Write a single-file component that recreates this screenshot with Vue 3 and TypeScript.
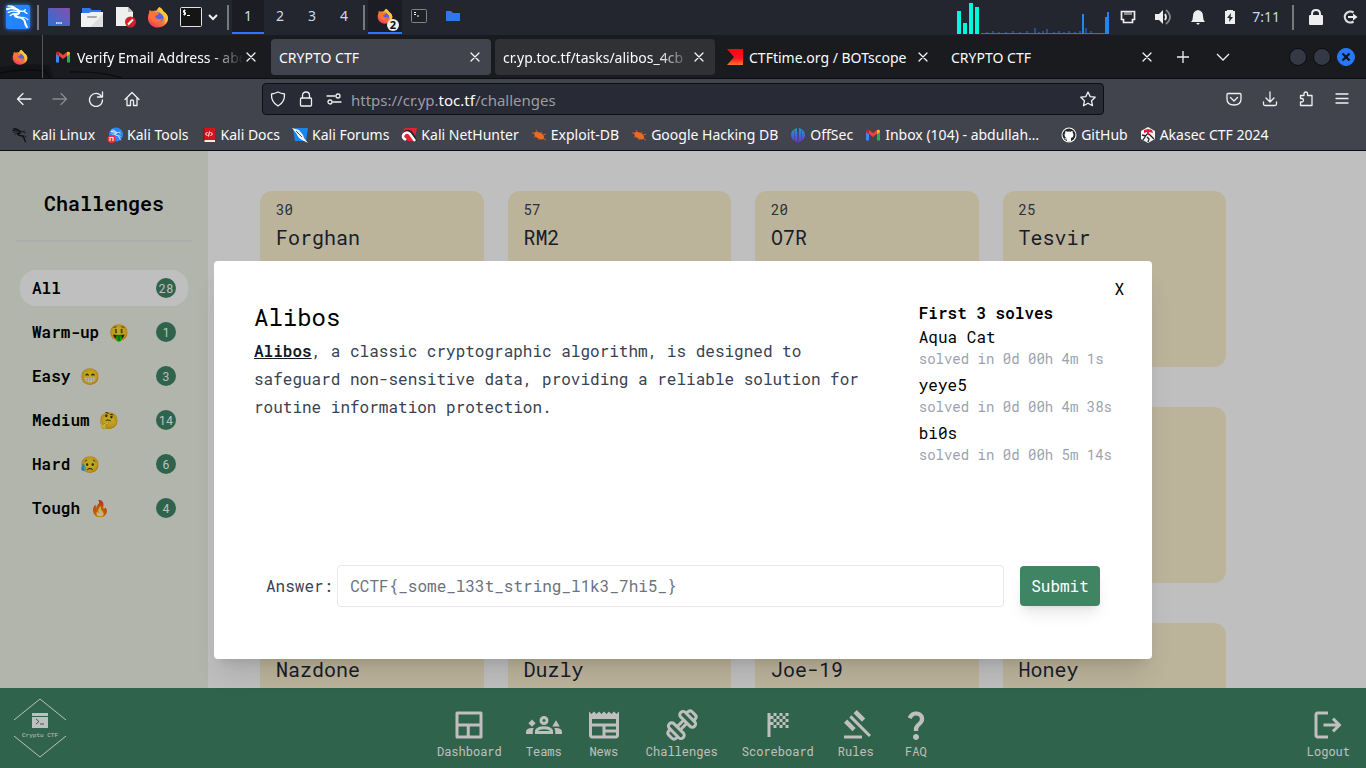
<script setup lang="ts">
import { ref } from 'vue'

interface Tab { title: string; icon?: string; state?: string; fade?: boolean }
interface Bookmark { title: string; icon: string; wide?: boolean }
interface Category { name: string; count: number }
interface Challenge { points: string; name: string }
interface Solve { team: string; time: string }
interface NavItem { label: string; icon: string }

const workspaces: number[] = [1, 2, 3, 4]

const tabs: Tab[] = [
  { title: 'Verify Email Address - abd', icon: 'gmail', fade: true },
  { title: 'CRYPTO CTF', state: 'active' },
  { title: 'cr.yp.toc.tf/tasks/alibos_4cb', state: 'hover', fade: true },
  { title: 'CTFtime.org / BOTscope', icon: 'ctftime' },
  { title: 'CRYPTO CTF' },
]

const bookmarks: Bookmark[] = [
  { title: 'Kali Linux', icon: 'dragon' },
  { title: 'Kali Tools', icon: 'tools' },
  { title: 'Kali Docs', icon: 'docs' },
  { title: 'Kali Forums', icon: 'forums' },
  { title: 'Kali NetHunter', icon: 'nethunter' },
  { title: 'Exploit-DB', icon: 'bug' },
  { title: 'Google Hacking DB', icon: 'bug' },
  { title: 'OffSec', icon: 'offsec' },
  { title: 'Inbox (104) - abdullah…', icon: 'gmail', wide: true },
  { title: 'GitHub', icon: 'github' },
  { title: 'Akasec CTF 2024', icon: 'akasec' },
]

const categories: Category[] = [
  { name: 'All', count: 28 },
  { name: 'Warm-up 🤑', count: 1 },
  { name: 'Easy 😁', count: 3 },
  { name: 'Medium 🤔', count: 14 },
  { name: 'Hard 😥', count: 6 },
  { name: 'Tough 🔥', count: 4 },
]

const challenges: Challenge[] = [
  { points: '30', name: 'Forghan' },
  { points: '57', name: 'RM2' },
  { points: '20', name: 'O7R' },
  { points: '25', name: 'Tesvir' },
  { points: '', name: '' },
  { points: '', name: '' },
  { points: '', name: '' },
  { points: '', name: '' },
  { points: '', name: 'Nazdone' },
  { points: '', name: 'Duzly' },
  { points: '', name: 'Joe-19' },
  { points: '', name: 'Honey' },
]

const solves: Solve[] = [
  { team: 'Aqua Cat', time: 'solved in 0d 00h 4m 1s' },
  { team: 'yeye5', time: 'solved in 0d 00h 4m 38s' },
  { team: 'bi0s', time: 'solved in 0d 00h 5m 14s' },
]

const nav: NavItem[] = [
  { label: 'Dashboard', icon: 'dashboard' },
  { label: 'Teams', icon: 'teams' },
  { label: 'News', icon: 'news' },
  { label: 'Challenges', icon: 'dumbbell' },
  { label: 'Scoreboard', icon: 'flag' },
  { label: 'Rules', icon: 'gavel' },
  { label: 'FAQ', icon: 'question' },
]

const selected = ref('All')
const answer = ref('')
</script>

<template>
  <svg class="sprite" aria-hidden="true">
    <defs>
      <linearGradient id="ff-flame" x1="0.8" y1="0" x2="0.2" y2="1">
        <stop offset="0" stop-color="#ffe14a" /><stop offset="0.4" stop-color="#ff9a2e" /><stop offset="1" stop-color="#f5305a" />
      </linearGradient>
      <linearGradient id="desk" x1="0" y1="1" x2="1" y2="0">
        <stop offset="0" stop-color="#2c6fd8" /><stop offset="1" stop-color="#8552a8" />
      </linearGradient>
      <linearGradient id="off" x1="0" y1="0" x2="0" y2="1">
        <stop offset="0" stop-color="#12a5c8" /><stop offset="1" stop-color="#6a35d8" />
      </linearGradient>
      <linearGradient id="ctf" x1="0" y1="0" x2="0" y2="1">
        <stop offset="0" stop-color="#ff0010" /><stop offset="0.6" stop-color="#ff1522" /><stop offset="1" stop-color="#f5782a" />
      </linearGradient>
    </defs>
    <symbol id="dragon-shape" viewBox="0 0 24 24">
      <g fill="none" stroke="currentColor" stroke-linecap="round" stroke-linejoin="round">
        <path d="M2 5q7-2.500 12 2q-1 4-5 3q1 3 5.500 3q4.500 1 5 6q.5 2 1.500 3" stroke-width="2" />
        <path d="M3 8q5-2 10-.5M5 11q2-2 6-2M14 7l4 0 3 2M18 7l1.500-1.500M8 4Q5 1 3 2M10 4Q8 2 6 2" stroke-width="1.300" />
        <path d="M15 13q4-1 7 2" stroke-width="1" />
      </g>
    </symbol>
    <symbol id="firefox" viewBox="0 0 24 24">
      <path d="M13.500 1q4 2.500 4.500 5q5 3 5 8c0 5-5 9.500-11 9.500S1 19 1 13q0-3 1.500-6l.3-3 2.700 2.500q2-1.500 5-1.500q1-3 3-4z" fill="url(#ff-flame)" />
      <circle cx="12.500" cy="12.500" r="5.500" fill="#5a5fe8" />
      <path d="M2.500 6Q7 4 9.500 7l4 .7q-1.500 2.800-4.500 3.300 0 3 4 3.500 2.500 0 4-1.500-1 4.500-5.500 5-6 0-8-5z" fill="#ff7332" />
      <path d="M18 6q5 3 5 8-1 4-4 6 2-7-3-11-3-2-2.500-8 4 2.500 4.500 5z" fill="#ffc53a" />
    </symbol>
    <symbol id="gmail" viewBox="0 0 16 16">
      <path d="M1 4v9.500h3V7z" fill="#4285f4" /><path d="M15 4v9.500h-3V7z" fill="#34a853" />
      <path d="M1 4.500V4q1-2 3-1l4 3 4-3q2-1 3 1v.5L8 10z" fill="#ea4335" />
      <path d="M12 3q2-1 3 1v1l-3 2.300z" fill="#fbbc04" /><path d="M1 4q.5-2 3-1v4.300L1 5z" fill="#c5221f" />
    </symbol>
    <symbol id="ctftime" viewBox="0 0 16 16"><path d="M0 0h16v16H0l7-8z" fill="url(#ctf)" /></symbol>
    <symbol id="dragon" viewBox="0 0 16 16"><use href="#dragon-shape" color="#111214" x="-1" y="0" width="17" height="16" /></symbol>
    <symbol id="tools" viewBox="0 0 16 16">
      <circle cx="9" cy="7.500" r="7" fill="#2c86f5" /><use href="#dragon-shape" color="#dbeaff" x="3" y="2" width="12" height="12" />
      <circle cx="4.500" cy="12" r="4" fill="#e53333" /><path d="M3 10.500v3.500M6 10.500v3.500M2.500 10.500h4" stroke="#fff" stroke-width="1" />
    </symbol>
    <symbol id="docs" viewBox="0 0 16 16">
      <path d="M2 1h12v12H2z" fill="#d3131d" /><path d="M2 13h12v2H2z" fill="#eee" /><path d="M2 1h1.500v14H2z" fill="#9c0f16" />
      <path d="M6.500 5L4.500 7l2 2M9.500 5l2 2-2 2M8.500 4.500l-1 5" fill="none" stroke="#fff" stroke-width="1" />
    </symbol>
    <symbol id="forums" viewBox="0 0 16 16">
      <path d="M4 1h12l-2 13H3L1 2z" fill="#1687f2" /><path d="M0 1l7 2 4 5 1 3 4 5-6-3-3-2-3-5z" fill="#f4f7fa" /><path d="M4 4l6 6" stroke="#4a5562" stroke-width="1" />
    </symbol>
    <symbol id="nethunter" viewBox="0 0 16 16">
      <path d="M4 1h12l-3 13H7L1 6z" fill="#e32436" /><path d="M2 8q2-5 6-4t7 10" fill="none" stroke="#202226" stroke-width="2" />
      <path d="M5 13q-5-3-2-6t6 0l5 7" fill="none" stroke="#fff" stroke-width="2.500" />
    </symbol>
    <symbol id="bug" viewBox="0 0 16 16">
      <ellipse cx="8.500" cy="8.500" rx="5.500" ry="3" transform="rotate(30 8 8)" fill="#ee6a1c" />
      <path d="M1 6l4 0M5 3l2 3M10 5l1 2M3 10l4-1M8 13l1-3M13 12l2 1M12 8l3-1" stroke="#ee6a1c" stroke-width=".8" />
    </symbol>
    <symbol id="offsec" viewBox="0 0 16 16">
      <path d="M7 1v14Q1 13 1 8t6-7zM9 1q6 2 6 7t-6 7z" fill="url(#off)" /><path d="M4.500 3v10M11.500 3v10" stroke="#42444d" stroke-width=".5" /><path d="M8 5v11" stroke="#5b45d8" stroke-width="1" />
    </symbol>
    <symbol id="github" viewBox="0 0 16 16">
      <circle cx="8" cy="8" r="7.500" fill="#fff" /><circle cx="8" cy="8" r="6.500" fill="#24262c" />
      <path d="M6 14.500v-2q-2 .5-2.700-1.500 1 .5 2.700.2Q3.500 10.500 3.500 8q0-1.200.8-2-.3-1 .2-2 1 0 1.900.8 1.600-.4 3.200 0Q10.500 4 11.500 4q.5 1 .2 2 .8.800.8 2 0 2.500-2.500 3v3.500z" fill="#fff" />
    </symbol>
    <symbol id="akasec" viewBox="0 0 16 16">
      <path d="M8 0l7 4v8l-7 4-7-4V4z" fill="#f4f4f4" /><path d="M7 7l-4 6M9 7l5 5M7 10l2 2-1 3M2 8l4 1" stroke="#24262c" stroke-width="1.300" fill="none" /><path d="M4 3l4-1 4 1 1 3-4-1v3H7V5L4 6z" fill="#e01e37" />
    </symbol>
    <symbol id="dashboard" viewBox="0 0 24 24">
      <path d="M4 4h16v16H4zM4 12h16M11.500 12v8" fill="none" stroke="currentColor" stroke-width="2" stroke-linejoin="round" />
    </symbol>
    <symbol id="teams" viewBox="0 0 24 24">
      <path fill="currentColor" d="M0 18v-1.575q0-1.075 1.100-1.750T4 14q.325 0 .625.013t.575.062q-.35.525-.525 1.100t-.175 1.200V18zm6 0v-1.625q0-.8.438-1.463t1.237-1.162T9.588 13T12 12.750q1.325 0 2.438.25t1.912.75t1.225 1.163t.425 1.462V18zm13.500 0v-1.625q0-.65-.162-1.225t-.488-1.075q.275-.05.563-.062T20 14q1.800 0 2.900.663t1.100 1.762V18zM8.125 16H15.900q-.25-.5-1.388-.875T12 14.750t-2.512.375T8.125 16M12 12q-1.250 0-2.125-.875T9 9q0-1.275.875-2.137T12 6q1.275 0 2.138.863T15 9q0 1.250-.862 2.125T12 12m0-2q.425 0 .713-.288T13 9t-.288-.712T12 8t-.712.288T11 9t.288.713T12 10M4 13.200L1.600 10.800L4 8.400l2.400 2.400zM17.500 13L20 8.800l2.500 4.200z" />
    </symbol>
    <symbol id="news" viewBox="0 0 24 24">
      <path fill="currentColor" d="M22 3l-1.670 1.670L18.670 3 17 4.670 15.330 3l-1.660 1.670L12 3l-1.670 1.670L8.670 3 7 4.670 5.330 3 3.670 4.670 2 3v16c0 1.100.9 2 2 2h16c1.100 0 2-.9 2-2V3zM11 19H4v-6h7v6zm9 0h-7v-2h7v2zm0-4h-7v-2h7v2zm0-4H4V8h16v3z" />
    </symbol>
    <symbol id="dumbbell" viewBox="0 0 24 24">
      <g transform="rotate(-45 12 12)" fill="none" stroke="currentColor" stroke-width="2">
        <rect x="4.500" y="5.500" width="4.300" height="13" rx="2" /><rect x="15.200" y="5.500" width="4.300" height="13" rx="2" />
        <path d="M4.500 8.500H3.500Q1 8.500 1 10.500v3q0 2 2.500 2h1M19.500 8.500h1q2.500 0 2.500 2v3q0 2-2.500 2h-1M9 10.500h6M9 13.500h6" />
      </g>
    </symbol>
    <symbol id="flag" viewBox="0 0 24 24">
      <path fill="currentColor" d="M11 6H9V4h2v2zm4-2h-2v2h2V4zM9 14h2v-2H9v2zm10-4V8h-2v2h2zm0 4v-2h-2v2h2zm-6 0h2v-2h-2v2zm6-10h-2v2h2V4zm-6 4V6h-2v2h2zm-6 2V8h2V6H7V4H5v16h2v-8h2v-2H7zm8 2h2v-2h-2v2zm-4-2v2h2v-2h-2zM9 8v2h2V8H9zm4 2h2V8h-2v2zm2-4v2h2V6h-2z" />
    </symbol>
    <symbol id="gavel" viewBox="0 0 24 24">
      <path fill="currentColor" d="M4 21v-2h12v2zm5.650-4.850L4 10.500l2.100-2.150L11.800 14zM16 9.800l-5.650-5.650L12.500 2l5.650 5.650zm4.600 10.200L7.550 6.950l1.400-1.400L22 18.600z" />
    </symbol>
    <symbol id="question" viewBox="0 0 24 24">
      <path fill="currentColor" d="M11.070 12.850c.77-1.390 2.250-2.210 3.110-3.440.91-1.290.4-3.700-2.180-3.700-1.690 0-2.520 1.280-2.870 2.340L6.540 6.960C7.250 4.830 9.180 3 11.990 3c2.350 0 3.960 1.070 4.780 2.410.7 1.150 1.110 3.300.03 4.900-1.200 1.770-2.350 2.310-2.970 3.450-.25.460-.35.760-.35 2.240h-2.890c-.01-.78-.13-2.050.48-3.150zM14 20c0 1.100-.9 2-2 2s-2-.9-2-2 .9-2 2-2 2 .9 2 2z" />
    </symbol>
    <symbol id="logout" viewBox="0 0 24 24">
      <path fill="currentColor" d="M5 21q-.825 0-1.412-.587T3 19V5q0-.825.588-1.412T5 3h7v2H5v14h7v2zm11-4l-1.375-1.450l2.550-2.550H9v-2h8.175l-2.550-2.550L16 7l5 5z" />
    </symbol>
    <symbol id="close" viewBox="0 0 16 16"><path d="M4 4l8 8M12 4l-8 8" stroke="currentColor" stroke-width="1.200" stroke-linecap="round" /></symbol>
  </svg>

  <div class="desktop">
    <header class="panel">
      <button class="p-btn logo" aria-label="Applications">
        <svg viewBox="0 0 32 34"><rect x="5" y="5" width="24" height="24" rx="2" fill="#2484fb" /><use href="#dragon-shape" color="#fff" x="4" y="4" width="25" height="25" /></svg>
      </button>
      <span class="sep"></span>
      <div class="launchers">
        <button class="p-btn" aria-label="Show desktop"><svg width="22" height="22" viewBox="0 0 22 22"><rect y="2" width="22" height="18" rx="1" fill="url(#desk)" /><path d="M8 17h6" stroke="#fff" stroke-width="1.500" stroke-dasharray="1.500 .7" /></svg></button>
        <button class="p-btn" aria-label="Files"><svg width="22" height="22" viewBox="0 0 22 22"><path d="M1 2h8l2 2h9v5H1z" fill="#2f78ec" /><path d="M0 7h8l2-1h12v15H0z" fill="#f1f1f1" /><path d="M22 8v13H9z" fill="#dedede" /><path d="M7 11h8" stroke="#aaa" stroke-width="2" stroke-linecap="round" /></svg></button>
        <button class="p-btn" aria-label="Text editor"><svg width="22" height="22" viewBox="0 0 22 22"><path d="M2 1h12l5 5v14H2z" fill="#efefef" /><path d="M14 1l5 5h-5z" fill="#bbb" /><circle cx="16.500" cy="16" r="5.500" fill="#d21f28" /><path d="M14 18.500l5-5" stroke="#fff" stroke-width="2" /></svg></button>
        <button class="p-btn" aria-label="Firefox"><svg width="22" height="22"><use href="#firefox" /></svg></button>
        <button class="p-btn" aria-label="Terminal"><svg width="22" height="22" viewBox="0 0 22 22"><rect x=".5" y="1.500" width="21" height="19" rx="1" fill="#151515" stroke="#e2e2e2" /><path d="M5.500 4.500H3.500v2h2v2H3.300M4.500 3.500v6M7 9.500h3" fill="none" stroke="#fff" stroke-width="1" /></svg></button>
      </div>
      <button class="p-btn caret" aria-label="More"><svg width="10" height="8" viewBox="0 0 10 8"><path d="M1 2l4 4 4-4" fill="none" stroke="#f0f0f0" stroke-width="2" /></svg></button>
      <span class="sep"></span>
      <nav class="spaces" aria-label="Workspaces">
        <button v-for="n in workspaces" :key="n" :class="{ on: n === 1 }">{{ n }}</button>
      </nav>
      <span class="sep"></span>
      <div class="tasks">
        <button class="on" aria-label="Firefox windows"><svg width="16" height="16"><use href="#firefox" /></svg><span class="count">2</span></button>
        <button aria-label="Terminal window"><svg width="16" height="14" viewBox="0 0 16 14"><rect x=".5" y=".5" width="15" height="13" rx="1" fill="#202127" stroke="#858585" /><path d="M3 3.500h2M3 5.500h2M6 7h2" stroke="#fff" /></svg></button>
        <button aria-label="Files window"><svg width="16" height="12" viewBox="0 0 16 12"><path d="M1 1h5l2 2h7v8H1z" fill="#2f78ec" /></svg></button>
      </div>
      <div class="tray">
        <svg class="graph" width="154" height="34" viewBox="0 0 154 34">
          <path d="M1 11h4v23H1zM7 23h4v11H7zM13 3h4v31h-4zM19 7h4v27h-4z" fill="#00f8dc" />
          <path d="M25 33.500h128" stroke="#2c6fd8" />
          <path d="M31 34v-2M37 34v-3M43 34v-2M50 34v-2M57 34v-3M64 34v-2M71 34v-3M79 34v-6M83 34v-2M87 34v-3M91 34v-5M98 34v-2M103 34v-3M108 34v-2M113 34v-3M119 34v-2M124 34v-3M130 34v-6M135 34v-3" stroke="#2779f5" />
          <path d="M127 34V14M150 34V17M152 34V12" stroke="#2187ee" stroke-width="2" />
        </svg>
        <svg width="16" height="16" viewBox="0 0 16 16"><path d="M1.500 2.500h13v8h-2v3h-9v-3h-2z" fill="none" stroke="#eee" stroke-width="1.700" /><path d="M5 3v3M7 3v3M9 3v3M11 3v3" stroke="#eee" /></svg>
        <svg width="18" height="18" viewBox="0 0 18 18"><path d="M1 6h4l4-4v14l-4-4H1z" fill="#eee" /><path d="M11 6q2 3 0 6" fill="none" stroke="#eee" stroke-width="1.800" /><path d="M12 2q8 7 0 14" fill="none" stroke="#85878d" stroke-width="1.800" /></svg>
        <svg width="16" height="16" viewBox="0 0 16 16"><path d="M1 13q2-2 2-6 0-5 5-6 5 1 5 6 0 4 2 6zM6 14h4l-2 2z" fill="#eee" /></svg>
        <svg width="12" height="16" viewBox="0 0 12 16"><path d="M3 1h6v1h2v13H1V2h2z" fill="#eee" /><path d="M7 4L3 9h2.500L5 13l4-5H6.500z" fill="#23252f" /></svg>
        <time>7:11</time>
        <span class="sep"></span>
        <svg width="16" height="18" viewBox="0 0 16 18"><path d="M4 8V6q0-4 4-4t4 4v2" fill="none" stroke="#eee" stroke-width="2" /><rect x="1" y="7" width="14" height="10" rx="1" fill="#eee" /></svg>
        <svg width="16" height="16" viewBox="0 0 16 16"><path d="M11.500 3.500a5.500 5.500 0 1 0 0 9" fill="none" stroke="#ddd" stroke-width="2.200" /><path d="M6 7h5V4.500L15.500 8 11 11.500V9H6z" fill="#eee" /></svg>
      </div>
    </header>

    <div class="tabbar">
      <svg class="backdrop" width="160" height="14" viewBox="0 0 160 14" aria-hidden="true"><path d="M0 3Q25-1 49 1l5 13H0z" fill="#131417" /><path d="M0 9q22-5 45-2l5 7M70 8q30-1 52 6" fill="none" stroke="#0c0d0f" stroke-width="1.500" /></svg>
      <button class="view" aria-label="Firefox View"><svg width="16" height="16"><use href="#firefox" /></svg></button>
      <div class="tabs" role="tablist">
        <div v-for="(t, i) in tabs" :key="i" class="tab" :class="t.state" role="tab">
          <svg v-if="t.icon" class="fav" width="16" height="16"><use :href="'#' + t.icon" /></svg>
          <span class="label" :class="{ fade: t.fade }">{{ t.title }}</span>
          <button aria-label="Close tab"><svg width="16" height="16"><use href="#close" /></svg></button>
        </div>
      </div>
      <button class="t-btn" aria-label="New tab"><svg width="16" height="16" viewBox="0 0 16 16"><path d="M8 2v12M2 8h12" stroke="#f0f0f0" stroke-width="1.300" /></svg></button>
      <button class="t-btn" aria-label="List tabs"><svg width="16" height="16" viewBox="0 0 16 16"><path d="M2 5l6 6 6-6" fill="none" stroke="#f0f0f0" stroke-width="1.300" /></svg></button>
      <div class="window">
        <button aria-label="Minimize"></button>
        <button aria-label="Maximize"></button>
        <button class="quit" aria-label="Close"><svg width="12" height="12" viewBox="0 0 12 12"><path d="M2.500 2.500l7 7M9.500 2.500l-7 7" stroke="#10131a" stroke-width="2.200" /></svg></button>
      </div>
    </div>

    <div class="chrome">
      <div class="toolbar">
        <button class="t-btn" aria-label="Back"><svg viewBox="0 0 16 16"><path d="M15 8H1.500M7 2.500L1.500 8 7 13.500" /></svg></button>
        <button class="t-btn off" aria-label="Forward"><svg viewBox="0 0 16 16"><path d="M1 8h13.500M9 2.500L14.500 8 9 13.500" /></svg></button>
        <button class="t-btn" aria-label="Reload"><svg viewBox="0 0 16 16"><path d="M13.500 5.500A6.500 6.500 0 1 0 14.500 9M14.500 1v5h-5" /></svg></button>
        <button class="t-btn" aria-label="Home"><svg viewBox="0 0 16 16"><path d="M1 8.500L8 1.500l7 7M3 7v7.500h3.500V10q0-1 1.500-1t1.500 1v4.500H13V7" /></svg></button>
        <div class="url">
          <svg viewBox="0 0 16 16"><path d="M8 1q3 1.500 6.500 2Q15 11 8 15 1 11 1.500 3 5 2.500 8 1z" /></svg>
          <svg viewBox="0 0 16 16"><path d="M4.500 7V4.500q0-3.500 3.500-3.500t3.500 3.500V7" /><rect x="2.500" y="7" width="11" height="8" rx="1" /></svg>
          <svg viewBox="0 0 16 16"><path d="M1 5h8M7 11h8" /><circle cx="12" cy="5" r="2" /><circle cx="4" cy="11" r="2" /></svg>
          <span class="addr">https://cr.yp.<b>toc.tf</b>/challenges</span>
          <button aria-label="Bookmark this page"><svg viewBox="0 0 16 16"><path d="M8 1l2.200 4.600 5 .6-3.700 3.500 1 5L8 12.200 3.500 14.700l1-5L.8 6.200l5-.6z" /></svg></button>
        </div>
        <button class="t-btn" aria-label="Save to Pocket"><svg viewBox="0 0 16 16"><path d="M2 2.500h12q1 0 1 1V8q0 6-7 6T1 8V3.500q0-1 1-1zM4.500 6.500L8 10l3.500-3.500" /></svg></button>
        <button class="t-btn" aria-label="Downloads"><svg viewBox="0 0 16 16"><path d="M8 1v10M4 7l4 4 4-4M1.500 11v2q0 1.500 1.500 1.500h10q1.500 0 1.500-1.500v-2" /></svg></button>
        <button class="t-btn" aria-label="Extensions"><svg viewBox="0 0 16 16"><path d="M6 4.500V3q0-2 1.800-2t1.700 2v1.500H14v10H2.500V11H4q1.500-.3 1.500-1.700T4 7.500H2.500v-3z" /></svg></button>
        <button class="t-btn" aria-label="Menu"><svg viewBox="0 0 16 16"><path d="M2 3h12M2 7.500h12M2 12h12" /></svg></button>
      </div>
      <nav class="bookmarks" aria-label="Bookmarks">
        <a v-for="b in bookmarks" :key="b.title" href="#" :class="{ wide: b.wide }">
          <svg width="16" height="16"><use :href="'#' + b.icon" /></svg>{{ b.title }}
        </a>
      </nav>
    </div>

    <div class="page">
      <div class="content">
        <aside>
          <h2>Challenges</h2>
          <ul>
            <li v-for="c in categories" :key="c.name">
              <button :class="{ on: selected === c.name }" @click="selected = c.name">{{ c.name }}<span>{{ c.count }}</span></button>
            </li>
          </ul>
        </aside>
        <main>
          <article v-for="(c, i) in challenges" :key="i">
            <p>{{ c.points }}</p>
            <h3>{{ c.name }}</h3>
          </article>
        </main>
      </div>
      <footer>
        <svg class="brand" width="52" height="60" viewBox="0 0 52 60" role="img" aria-label="Crypto CTF">
          <path d="M0 22L26 1l26 21M0 38l26 21 26-21" fill="none" stroke="currentColor" />
          <rect x="18" y="15" width="16" height="15" fill="currentColor" /><path d="M18 18.500h16" stroke="#3f8564" />
          <path d="M22 21l3 2.500-3 2.500M26 26h4" fill="none" stroke="#3f8564" />
          <text x="26" y="39" text-anchor="middle" font-size="6" font-family="Liberation Mono, monospace" fill="currentColor">Crypto CTF</text>
        </svg>
        <nav>
          <a v-for="n in nav" :key="n.label" href="#"><svg width="36" height="36"><use :href="'#' + n.icon" /></svg>{{ n.label }}</a>
        </nav>
        <a href="#"><svg width="36" height="36"><use href="#logout" /></svg>Logout</a>
      </footer>

      <div class="overlay">
        <section class="dialog" role="dialog" aria-labelledby="dlg-title">
          <button class="x" aria-label="Close dialog">X</button>
          <div class="cols">
            <div class="desc">
              <h1 id="dlg-title">Alibos</h1>
              <p><a href="#">Alibos</a>, a classic cryptographic algorithm, is designed to safeguard non-sensitive data, providing a reliable solution for routine information protection.</p>
            </div>
            <div class="solves">
              <h4>First 3 solves</h4>
              <div v-for="s in solves" :key="s.team" class="solve"><p>{{ s.team }}</p><small>{{ s.time }}</small></div>
            </div>
          </div>
          <form @submit.prevent>
            <label for="answer">Answer:</label>
            <input id="answer" v-model="answer" type="text" placeholder="CCTF{_some_l33t_string_l1k3_7hi5_}" />
            <button type="submit">Submit</button>
          </form>
        </section>
      </div>
    </div>
  </div>
</template>

<style>
body { margin: 0; overflow: hidden; }
</style>

<style scoped>
* { box-sizing: border-box; }
button { border: 0; padding: 0; background: none; color: inherit; font: inherit; cursor: pointer; }
a { color: inherit; text-decoration: none; }
h1, h2, h3, h4, p, ul { margin: 0; padding: 0; font-weight: 400; list-style: none; }
svg { display: block; flex: none; }
.sprite { position: absolute; width: 0; height: 0; }
.desktop { height: 100vh; display: flex; flex-direction: column; font: 14px/20px "Noto Sans", "Open Sans", sans-serif; color: #fbfbfe; background: #1a1b1f; }

.panel { height: 35px; flex: none; display: flex; align-items: center; background: #23252f; padding-bottom: 1px; }
.p-btn { display: flex; }
.logo { width: 34px; }
.logo svg { width: 34px; height: 34px; filter: drop-shadow(0 0 2px #2484fb); }
.sep { width: 2px; height: 25px; margin: 0 3px; background: #77797e; flex: none; }
.launchers { display: flex; gap: 12px; padding-left: 6px; }
.caret { padding: 0 6px; }
.launchers { gap: 11px; }
.spaces, .tasks { display: flex; align-self: stretch; color: #c9dceb; }
.spaces button { width: 32px; border-bottom: 2px solid transparent; }
.spaces .on, .tasks .on { background: #1b1c24; border-bottom: 2px solid #2777ff; }
.tasks button { width: 34px; display: flex; align-items: center; justify-content: center; position: relative; border-bottom: 2px solid transparent; }
.count { position: absolute; right: 3px; bottom: 1px; width: 12px; height: 12px; border-radius: 6px; background: #eee; color: #111; font-size: 11px; font-weight: 700; line-height: 12px; }
.tray { margin-left: auto; display: flex; align-items: center; gap: 18px; padding-right: 8px; }
.graph { margin-right: -8px; }
.tray .sep { margin: 0 -4px; }
.tray time { color: #c9dceb; margin: 0 -2px; }

.tabbar { height: 44px; flex: none; display: flex; align-items: center; position: relative; border-bottom: 1px solid #0d0e10; }
.backdrop { position: absolute; left: 0; bottom: 0; }
.view { width: 43px; height: 100%; border-right: 1px solid #55565a; padding-left: 12px; position: relative; }
.tabs { display: flex; gap: 4px; padding-left: 4px; flex: 1; min-width: 0; max-width: 1120px; position: relative; }
.tab { flex: 1 1 0; min-width: 0; height: 36px; border-radius: 4px; display: flex; align-items: center; padding: 0 8px; }
.tab.active { background: #42444d; }
.tab.hover { background: #303135; }
.fav { margin-right: 6px; }
.label { flex: 1; min-width: 0; overflow: hidden; white-space: nowrap; line-height: 20px; padding-top: 2px; }
.label.fade { mask-image: linear-gradient(to left, transparent, #000 32px); }
.t-btn { width: 36px; height: 32px; display: flex; align-items: center; justify-content: center; flex: none; }
.tabbar > .t-btn { width: 40px; }
.window { margin-left: auto; display: flex; gap: 6px; padding-right: 11px; }
.window button { width: 18px; height: 18px; border-radius: 9px; background: #343945; border: 1px solid #0b0c0f; display: flex; align-items: center; justify-content: center; }
.window .quit { background: #2777ff; border-color: #2777ff; }

.chrome { flex: none; background: #42444d; border-bottom: 1px solid #0d0d11; }
.toolbar { height: 40px; display: flex; align-items: center; padding: 0 6px; }
.toolbar svg { width: 16px; height: 16px; fill: none; stroke: #f0f0f2; stroke-width: 1.300; stroke-linejoin: round; stroke-linecap: round; }
.off { opacity: .4; }
.url { flex: 1; margin: 0 112px; height: 32px; display: flex; align-items: center; gap: 12px; padding: 0 7px; background: #282a36; border: 1px solid #0e0f14; border-radius: 4px; }
.addr { flex: 1; color: #9c9da3; margin-left: -3px; font-size: 15px; padding-top: 1px; }
.addr b { font-weight: 400; color: #fbfbfe; }
.bookmarks { height: 31px; display: flex; align-items: center; gap: 12px; padding: 0 12px; }
.bookmarks a { display: flex; align-items: center; gap: 4px; white-space: nowrap; }
.bookmarks .wide { width: 184px; }

.page { flex: 1; min-height: 0; display: flex; flex-direction: column; position: relative; overflow: hidden; background: #fff; color: #000; font: 16px/24px "Roboto Mono", "Liberation Mono", monospace; }
.content { flex: 1; min-height: 0; display: flex; overflow: hidden; }
aside { width: 208px; flex: none; background: #eef2e4; padding: 36px 16px; }
aside h2 { font-size: 20px; line-height: 32px; font-weight: 600; text-align: center; padding-bottom: 21px; border-bottom: 2px solid #e5e7eb; margin-bottom: 28px; }
aside ul { display: grid; gap: 8px; padding: 0 4px; }
aside button { width: 100%; height: 36px; border-radius: 16px; padding: 0 12px; display: flex; align-items: center; justify-content: space-between; font-weight: 600; }
aside .on { background: #fff; }
aside button span { width: 20px; height: 20px; border-radius: 10px; background: #3f8564; color: #fff; font-size: 12px; line-height: 20px; font-weight: 400; }
main { flex: 1; display: grid; grid-template-columns: repeat(4, 1fr); grid-auto-rows: 176px; gap: 40px 24px; padding: 40px 140px 0 52px; color: #1f2937; }
article { background: #fbefcf; border-radius: 12px; padding: 8px 16px; }
article p { height: 24px; font-size: 14px; line-height: 20px; padding-top: 1px; color: #374151; }
article h3 { font-size: 20px; line-height: 28px; }
footer { height: 80px; flex: none; display: flex; justify-content: space-between; background: #3f8564; color: #fff; padding: 0 16px 0 14px; font-size: 12px; line-height: 16px; }
footer nav { display: flex; gap: 24px; padding-right: 2px; }
footer a { display: flex; flex-direction: column; align-items: center; padding-top: 19px; }
.brand { margin-top: 10px; }

.overlay { position: absolute; inset: 0; background: rgba(0, 0, 0, .25); display: flex; align-items: center; justify-content: center; }
.dialog { position: relative; width: 90%; max-width: 938px; background: #fff; border-radius: 4px; padding: 40px 40px 52px; box-shadow: 0 20px 25px -5px rgba(0, 0, 0, .1), 0 8px 10px -6px rgba(0, 0, 0, .1); }
.x { position: absolute; top: 16px; right: 28px; }
.cols { display: flex; gap: 24px; min-height: 264px; }
.desc { flex: 1; }
.desc h1 { font-size: 24px; line-height: 32px; margin-bottom: 4px; }
.desc p { line-height: 28px; color: #374151; }
.desc a { color: #111827; font-weight: 600; text-decoration: underline; }
.solves h4 { font-weight: 600; }
.solve { margin-bottom: 4px; }
.solve small { display: block; font-size: 14px; line-height: 20px; color: #9ca3af; }
form { display: flex; align-items: center; padding: 0 12px; color: #374151; }
form input { flex: 1; min-width: 0; height: 42px; margin: 0 16px 0 4px; padding: 0 12px; border: 1px solid #e5e7eb; border-radius: 4px; font: inherit; }
form input::placeholder { color: #6b7280; }
form button { width: 80px; height: 40px; border-radius: 4px; background: #3f8564; color: #fff; box-shadow: 0 10px 15px -3px rgba(0, 0, 0, .1), 0 4px 6px -4px rgba(0, 0, 0, .1); }
</style>
